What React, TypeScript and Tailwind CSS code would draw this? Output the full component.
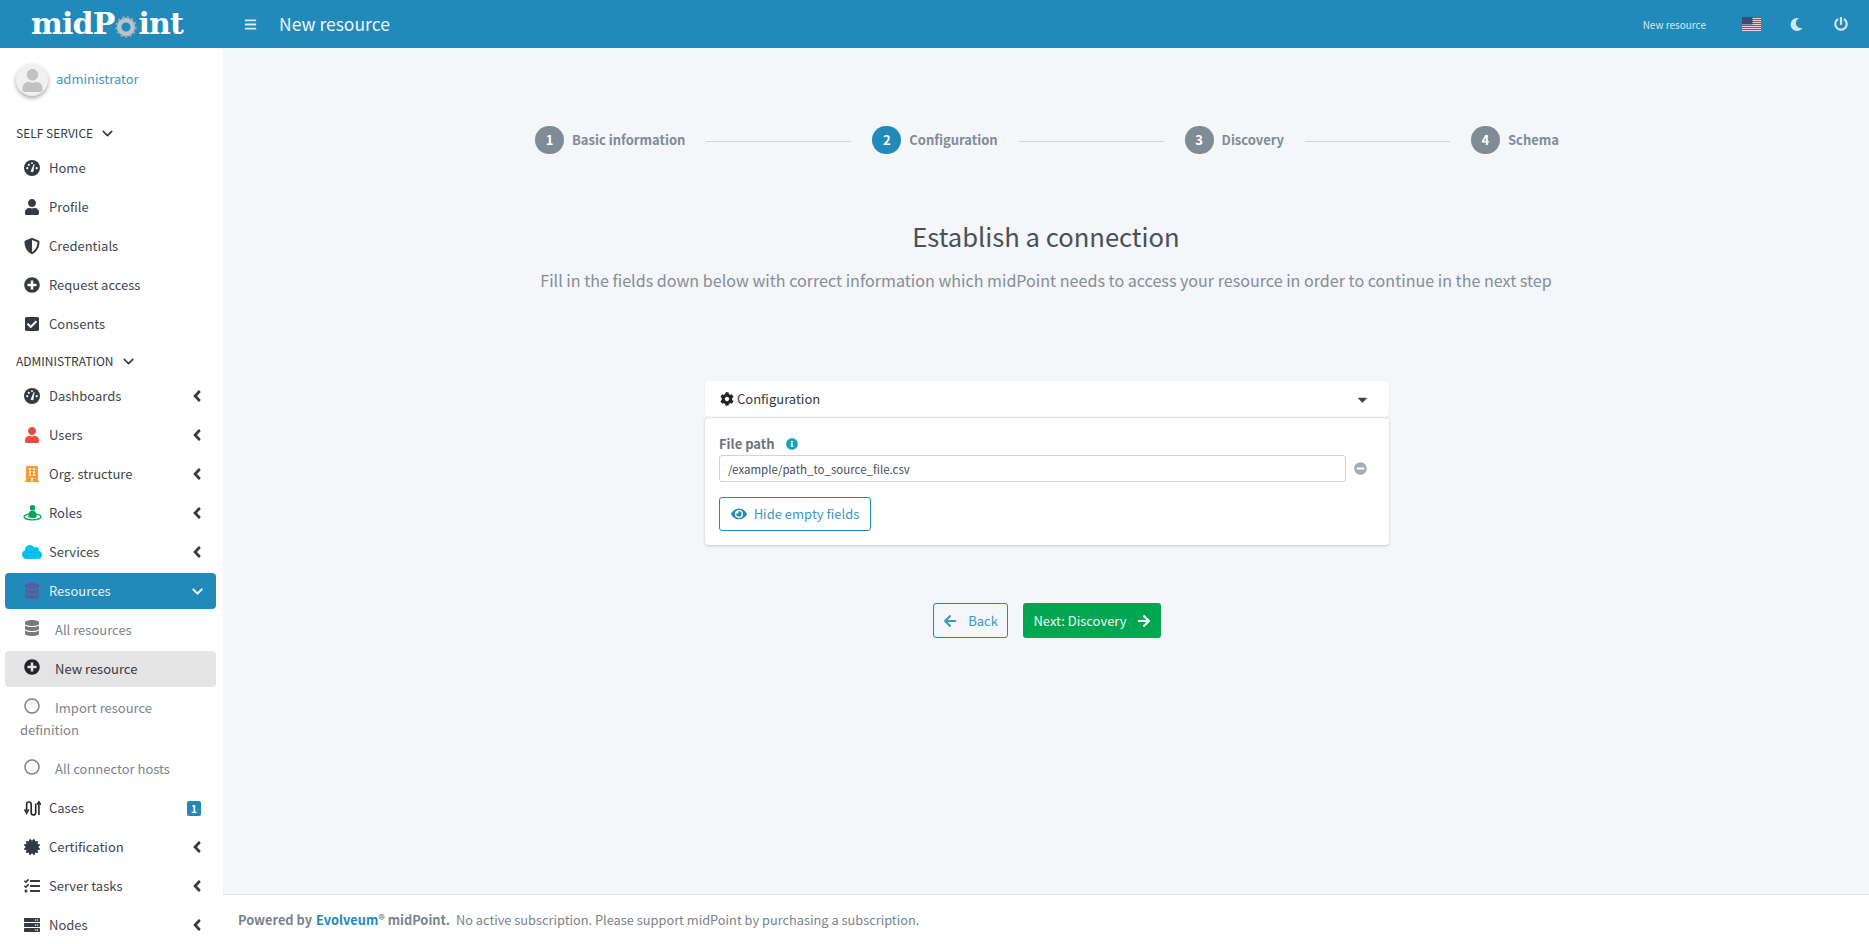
import { Fragment } from "react"
import type { ReactNode } from "react"
import { ChevronDown } from "lucide-react"
import {
  FaAngleLeft,
  FaArrowLeft,
  FaArrowRight,
  FaBars,
  FaBuilding,
  FaCaretDown,
  FaCertificate,
  FaCheckSquare,
  FaCloud,
  FaCog,
  FaDatabase,
  FaEye,
  FaInfoCircle,
  FaMinusCircle,
  FaMoon,
  FaPlusCircle,
  FaPowerOff,
  FaRegCircle,
  FaServer,
  FaShieldAlt,
  FaTasks,
  FaUser,
} from "react-icons/fa"

function GearO() {
  return (
    <svg viewBox="0 0 24 24" className="w-[22px] h-[22px] mx-[1px] mt-[5px]">
      <circle cx="12" cy="12" r="7.5" fill="none" stroke="#b9c4ca" strokeWidth="5" />
      <circle cx="12" cy="12" r="10.5" fill="none" stroke="#8fa9b6" strokeWidth="2.5" strokeDasharray="2.5 2.5" />
    </svg>
  )
}

function GaugeIcon() {
  return (
    <svg viewBox="0 0 16 16" className="w-4 h-4">
      <circle cx="8" cy="8" r="8" fill="#343a40" />
      <path d="M7 11.500 10 4.500 9 11.800z" fill="#fff" stroke="#fff" strokeWidth="0.8" strokeLinejoin="round" />
      <circle cx="3.300" cy="8.200" r="1.100" fill="#fff" />
      <circle cx="4.800" cy="4.800" r="1.100" fill="#fff" />
      <circle cx="8" cy="3.200" r="0.900" fill="#fff" />
      <circle cx="12.700" cy="8.200" r="1.100" fill="#fff" />
    </svg>
  )
}

function RolesIcon() {
  return (
    <svg viewBox="0 0 20 17" className="w-[19px] h-4">
      <ellipse cx="10" cy="12.500" rx="9" ry="3.200" fill="none" stroke="#00a65a" strokeWidth="1.300" />
      <circle cx="10" cy="3" r="2.900" fill="#00a65a" />
      <path d="M5.500 13c0-5 1.500-6.800 4.500-6.800s4.500 1.800 4.500 6.800c-2.500 1-6.500 1-9 0z" fill="#00a65a" />
    </svg>
  )
}

function CasesIcon() {
  return (
    <svg viewBox="0 0 18 18" className="w-[17px] h-[17px]" fill="none" stroke="#212529" strokeWidth="1.700">
      <path d="M2.800 12V4.500a2.400 2.400 0 0 1 4.800 0v9a2.400 2.400 0 0 0 4.800 0V4" />
      <path d="M15.800 16V2" />
      <path d="M13.600 5 15.800 1.800 18 5M0.600 10 2.800 14 5 10" strokeWidth="1.500" />
    </svg>
  )
}

function Flag() {
  const stripes = [0, 2, 4, 6, 8, 10, 12]
  return (
    <svg viewBox="0 0 19 14" className="w-[19px] h-[14px]">
      <rect width="19" height="14" fill="#e8e8ee" />
      {stripes.map((y) => (
        <rect key={y} y={y} width="19" height="1.100" fill="#c0394b" />
      ))}
      <rect width="10.500" height="7.500" fill="#3c4a78" />
    </svg>
  )
}

type Item = {
  label: string
  icon: ReactNode
  arrow?: boolean
  badge?: string
}

const selfService: Item[] = [
  { label: "Home", icon: <GaugeIcon /> },
  { label: "Profile", icon: <FaUser size={16} /> },
  { label: "Credentials", icon: <FaShieldAlt size={16} /> },
  { label: "Request access", icon: <FaPlusCircle size={16} /> },
  { label: "Consents", icon: <FaCheckSquare size={16} /> },
]

const admin: Item[] = [
  { label: "Dashboards", icon: <GaugeIcon />, arrow: true },
  { label: "Users", icon: <FaUser size={16} className="text-[#e74c3c]" />, arrow: true },
  { label: "Org. structure", icon: <FaBuilding size={16} className="text-[#fd9a2d]" />, arrow: true },
  { label: "Roles", icon: <RolesIcon />, arrow: true },
  { label: "Services", icon: <FaCloud size={20} className="text-[#00c0ef]" />, arrow: true },
]

const adminAfter: Item[] = [
  { label: "Cases", icon: <CasesIcon />, badge: "1" },
  { label: "Certification", icon: <FaCertificate size={16} />, arrow: true },
  { label: "Server tasks", icon: <FaTasks size={16} />, arrow: true },
  { label: "Nodes", icon: <FaServer size={16} />, arrow: true },
]

function NavRow({ item }: { item: Item }) {
  return (
    <div className="ml-[5px] mr-[7px] mb-[3px] h-9 pl-[15px] pr-[10px] flex items-center text-[#3e4750]">
      <span className="w-6 flex justify-center text-[#343a40]">{item.icon}</span>
      <span className="ml-[5px] flex-1">{item.label}</span>
      {item.arrow && <FaAngleLeft size={18} className="text-[#343a40]" />}
      {item.badge && (
        <span className="mr-[5px] w-[14px] h-[15px] rounded-[2px] bg-[#2289bb] text-white text-[10px] font-bold leading-[15px] text-center">
          {item.badge}
        </span>
      )}
    </div>
  )
}

function SubRow({ icon, label, active }: { icon: ReactNode; label: string; active?: boolean }) {
  return (
    <div
      className={
        "ml-[5px] mr-[7px] mb-[3px] py-[7px] pl-[15px] pr-2 rounded-[4px] leading-[22px] " +
        (active ? "bg-[#e4e4e4] text-[#343a40]" : "text-[#7b848c]")
      }
    >
      <span className="inline-flex w-6 justify-center align-[-1px] mr-[11px]">{icon}</span>
      {label}
    </div>
  )
}

function SectionLabel({ label }: { label: string }) {
  return (
    <div className="h-6 pl-4 flex items-center gap-[6px] text-[12px] text-[#343a40]">
      <span>{label}</span>
      <ChevronDown size={17} strokeWidth={2.2} />
    </div>
  )
}

function Sidebar() {
  return (
    <aside className="w-[223px] shrink-0 bg-white overflow-hidden text-[13px]">
      <div className="h-[64px] pl-4 flex items-center gap-[8px]">
        <div className="w-8 h-8 rounded-full bg-[#f1f1f1] shadow-[0_2px_4px_rgba(0,0,0,0.35)] flex items-center justify-center overflow-hidden">
          <FaUser size={23} className="text-[#c2c2c2]" />
        </div>
        <span className="text-[#3c98c4] -mt-[3px]">administrator</span>
      </div>
      <div className="mt-[9px] mb-[5px]">
        <SectionLabel label="SELF SERVICE" />
      </div>
      {selfService.map((item) => (
        <NavRow key={item.label} item={item} />
      ))}
      <div className="mb-[5px] mt-[7px]">
        <SectionLabel label="ADMINISTRATION" />
      </div>
      {admin.map((item) => (
        <NavRow key={item.label} item={item} />
      ))}
      <div className="ml-[5px] mr-[7px] mb-[3px] h-9 pl-[15px] pr-[10px] flex items-center rounded-[4px] bg-[#2289bb] text-[#e6f2f8]">
        <span className="w-6 flex justify-center">
          <FaDatabase size={16} className="text-[#5a5ba0]" />
        </span>
        <span className="ml-[5px] flex-1">Resources</span>
        <ChevronDown size={17} strokeWidth={2.8} className="text-white" />
      </div>
      <SubRow icon={<FaDatabase size={16} className="text-[#7a7a7a]" />} label="All resources" />
      <SubRow icon={<FaPlusCircle size={16} className="text-[#212529]" />} label="New resource" active />
      <SubRow icon={<FaRegCircle size={16} className="text-[#7b848c]" />} label="Import resource definition" />
      <SubRow icon={<FaRegCircle size={16} className="text-[#7b848c]" />} label="All connector hosts" />
      {adminAfter.map((item) => (
        <NavRow key={item.label} item={item} />
      ))}
    </aside>
  )
}

function Header() {
  return (
    <header className="h-12 shrink-0 bg-[#2289bb] flex items-center text-white">
      <div className="w-[223px] pl-[31px] flex items-center text-[30px] leading-none font-bold font-['DejaVu_Serif',serif] tracking-[-0.8px]">
        <span>midP</span>
        <GearO />
        <span>int</span>
      </div>
      <FaBars size={13} className="ml-[21px] text-[#dbeaf2]" />
      <h1 className="ml-[22px] text-[17.5px] text-[#eef6fa] flex-1">New resource</h1>
      <span className="text-[10px] text-[#d5e8f2]">New resource</span>
      <span className="ml-[36px]">
        <Flag />
      </span>
      <FaMoon size={13} className="ml-[29px] text-[#cfe4ef]" />
      <FaPowerOff size={14} className="ml-[31px] mr-[21px] text-[#cfe4ef]" />
    </header>
  )
}

const steps = [
  { n: 1, label: "Basic information" },
  { n: 2, label: "Configuration", active: true },
  { n: 3, label: "Discovery" },
  { n: 4, label: "Schema" },
]

function Stepper() {
  return (
    <div className="w-[1024px] ml-[312px] flex items-center gap-[21px]">
      {steps.map((step, i) => (
        <Fragment key={step.n}>
          <div className="flex items-center gap-[8px] font-bold text-[13px] text-[#7f8b95]">
            <span
              className={
                "w-[29px] h-[28px] rounded-full text-white text-[13px] font-bold flex items-center justify-center " +
                (step.active ? "bg-[#2289bb]" : "bg-[#7f8b95]")
              }
            >
              {step.n}
            </span>
            <span>{step.label}</span>
          </div>
          {i < 3 && <div className="flex-1 h-px bg-[#d0d4da] mt-[2px]" />}
        </Fragment>
      ))}
    </div>
  )
}

function ConfigPanel() {
  return (
    <div className="w-[684px] ml-[482px]">
      <div className="h-9 rounded-[4px] bg-white px-[15px] flex items-center gap-[3px] text-[#343a40] text-[13px] shadow-[0_0_1px_rgba(0,0,0,0.15)]">
        <FaCog size={14} className="text-[#212529]" />
        <span className="flex-1">Configuration</span>
        <FaCaretDown size={15} className="mr-[4px] text-[#3d444a]" />
      </div>
      <div className="h-[128px] rounded-[4px] bg-white border-t border-[#dde0e6] shadow-[0_1px_3px_rgba(0,0,0,0.2)] px-[14px] pt-[14px]">
        <div className="flex items-center gap-[11px] h-6 font-bold text-[13px] text-[#6c757d]">
          <span>File path</span>
          <FaInfoCircle size={12} className="text-[#17a2b8]" />
        </div>
        <div className="flex items-center gap-2 -mt-[1px]">
          <input
            readOnly
            value="/example/path_to_source_file.csv"
            className="w-[627px] h-[27px] px-2 border border-[#ced4da] rounded-[3px] text-[11.5px] text-[#495057] outline-none"
          />
          <FaMinusCircle size={13} className="text-[#a5adb7]" />
        </div>
        <button className="mt-[15px] h-[34px] w-[152px] border border-[#2289bb] rounded-[3px] flex items-center justify-center gap-[7px] text-[13px] text-[#3c98c4]">
          <FaEye size={16} className="text-[#2289bb]" />
          <span>Hide empty fields</span>
        </button>
      </div>
    </div>
  )
}

export default function App() {
  return (
    <div className="h-screen overflow-hidden flex flex-col bg-[#f4f6f9] font-['Noto_Sans_CJK_SC','Noto_Sans',sans-serif]">
      <Header />
      <div className="flex-1 flex min-h-0">
        <Sidebar />
        <div className="flex-1 flex flex-col min-w-0">
          <main className="flex-1 pt-[78px]">
            <Stepper />
            <h2 className="mt-[61px] h-[42px] leading-[42px] text-center text-[25.6px] text-[#495057]">
              Establish a connection
            </h2>
            <p className="mt-[11px] h-6 leading-6 text-center text-[16.1px] text-[#868e96]">
              Fill in the fields down below with correct information which midPoint needs to access your resource in
              order to continue in the next step
            </p>
            <div className="mt-[89px]">
              <ConfigPanel />
            </div>
            <div className="mt-[58px] pl-[2px] flex justify-center gap-[15px]">
              <button className="w-[75px] h-[35px] border border-[#2289bb] rounded-[3px] flex items-center justify-center gap-[11px] text-[13px] text-[#3c98c4]">
                <FaArrowLeft size={14} />
                <span>Back</span>
              </button>
              <button className="w-[138px] h-[35px] rounded-[3px] bg-[#00a651] flex items-center justify-center gap-[10px] text-[13px] text-[#eefaf3]">
                <span>Next: Discovery</span>
                <FaArrowRight size={14} className="text-white" />
              </button>
            </div>
          </main>
          <footer className="h-[50px] shrink-0 bg-white border-t border-[#dee2e6] pl-[15px] flex items-center text-[12.8px] text-[#7b848c]">
            <span className="font-bold">Powered by</span>
            <span className="font-bold text-[#2289bb] ml-1">Evolveum</span>
            <span className="font-bold">® midPoint.</span>
            <span className="ml-[6px]">No active subscription. Please support midPoint by purchasing a subscription.</span>
          </footer>
        </div>
      </div>
    </div>
  )
}
